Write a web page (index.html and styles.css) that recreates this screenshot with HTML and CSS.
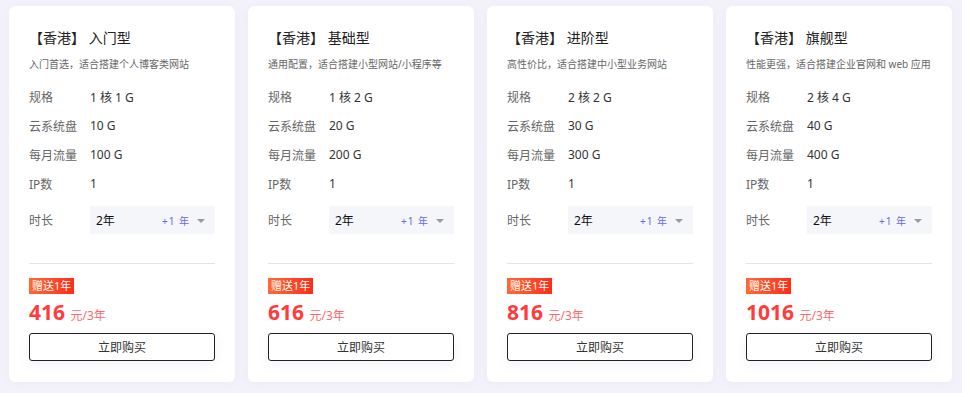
FILE: index.html
```html
<!DOCTYPE html>
<html lang="zh-CN">
<head>
  <meta charset="UTF-8">
  <meta name="viewport" content="width=device-width, initial-scale=1.0">
  <title>香港云服务器套餐</title>
  <link rel="stylesheet" href="styles.css">
</head>
<body>

  <div class="plans">
    <div class="card">
      <h3 class="title">【香港】 入门型</h3>
      <p class="desc">入门首选，适合搭建个人博客类网站</p>
      <div class="row"><span class="label">规格</span><span class="value">1 核 1 G</span></div>
      <div class="row"><span class="label">云系统盘</span><span class="value">10 G</span></div>
      <div class="row"><span class="label">每月流量</span><span class="value">100 G</span></div>
      <div class="row"><span class="label">IP数</span><span class="value">1</span></div>
      <div class="row time-row">
        <span class="label">时长</span>
        <div class="select"><span class="sel-val">2年</span><span class="extra">+1 年</span><span class="arrow"></span></div>
      </div>
      <div class="bottom">
        <span class="badge">赠送1年</span>
        <div class="price">416 <span class="unit">元/3年</span></div>
        <button class="buy">立即购买</button>
      </div>
    </div>

    <div class="card">
      <h3 class="title">【香港】 基础型</h3>
      <p class="desc">通用配置，适合搭建小型网站/小程序等</p>
      <div class="row"><span class="label">规格</span><span class="value">1 核 2 G</span></div>
      <div class="row"><span class="label">云系统盘</span><span class="value">20 G</span></div>
      <div class="row"><span class="label">每月流量</span><span class="value">200 G</span></div>
      <div class="row"><span class="label">IP数</span><span class="value">1</span></div>
      <div class="row time-row">
        <span class="label">时长</span>
        <div class="select"><span class="sel-val">2年</span><span class="extra">+1 年</span><span class="arrow"></span></div>
      </div>
      <div class="bottom">
        <span class="badge">赠送1年</span>
        <div class="price">616 <span class="unit">元/3年</span></div>
        <button class="buy">立即购买</button>
      </div>
    </div>

    <div class="card">
      <h3 class="title">【香港】 进阶型</h3>
      <p class="desc">高性价比，适合搭建中小型业务网站</p>
      <div class="row"><span class="label">规格</span><span class="value">2 核 2 G</span></div>
      <div class="row"><span class="label">云系统盘</span><span class="value">30 G</span></div>
      <div class="row"><span class="label">每月流量</span><span class="value">300 G</span></div>
      <div class="row"><span class="label">IP数</span><span class="value">1</span></div>
      <div class="row time-row">
        <span class="label">时长</span>
        <div class="select"><span class="sel-val">2年</span><span class="extra">+1 年</span><span class="arrow"></span></div>
      </div>
      <div class="bottom">
        <span class="badge">赠送1年</span>
        <div class="price">816 <span class="unit">元/3年</span></div>
        <button class="buy">立即购买</button>
      </div>
    </div>

    <div class="card">
      <h3 class="title">【香港】 旗舰型</h3>
      <p class="desc">性能更强，适合搭建企业官网和 web 应用</p>
      <div class="row"><span class="label">规格</span><span class="value">2 核 4 G</span></div>
      <div class="row"><span class="label">云系统盘</span><span class="value">40 G</span></div>
      <div class="row"><span class="label">每月流量</span><span class="value">400 G</span></div>
      <div class="row"><span class="label">IP数</span><span class="value">1</span></div>
      <div class="row time-row">
        <span class="label">时长</span>
        <div class="select"><span class="sel-val">2年</span><span class="extra">+1 年</span><span class="arrow"></span></div>
      </div>
      <div class="bottom">
        <span class="badge">赠送1年</span>
        <div class="price">1016 <span class="unit">元/3年</span></div>
        <button class="buy">立即购买</button>
      </div>
    </div>
  </div>

</body>
</html>
```

FILE: styles.css
```css
body {
  margin: 0;
  background-color: #f3f2fb;
  font-family: "Noto Sans", "Noto Sans CJK SC", sans-serif;
  color: #333;
}

.plans {
  display: grid;
  grid-template-columns: repeat(4, 226px);
  gap: 13px;
  padding: 6px 9px;
}

.card {
  background-color: #fff;
  border-radius: 6px;
  padding: 22px 20px 21px;
  box-shadow: 0 2px 10px rgba(120, 120, 180, 0.06);
}

.title {
  margin: 0;
  font-size: 14px;
  line-height: 20px;
  font-weight: 400;
  color: #222;
}

.desc {
  margin: 8px 0 10px;
  font-size: 10px;
  line-height: 16px;
  color: #666;
  white-space: nowrap;
}

.row {
  display: flex;
  align-items: center;
  height: 29px;
  font-size: 12px;
}

.label {
  width: 61px;
  flex-shrink: 0;
  color: #666;
}

.value {
  color: #333;
}

.time-row {
  margin-top: 8px;
  height: 28px;
}

.select {
  flex: 1;
  height: 28px;
  display: flex;
  align-items: center;
  background-color: #f5f6fa;
  padding: 0 10px 0 6px;
}

.sel-val {
  flex: 1;
  color: #111;
}

.extra {
  font-size: 10px;
  letter-spacing: 1px;
  color: #6b66f0;
  margin-right: 7px;
}

.arrow {
  width: 0;
  height: 0;
  border-left: 4px solid transparent;
  border-right: 4px solid transparent;
  border-top: 4px solid #999;
  margin-top: 2px;
}

.bottom {
  margin-top: 29px;
  border-top: 1px solid #e4e4e8;
  padding-top: 14px;
}

.badge {
  display: block;
  width: max-content;
  height: 16px;
  line-height: 16px;
  padding: 0 3px;
  font-size: 11px;
  color: #fff;
  background: linear-gradient(90deg, #ff6a33, #ff2d1a);
}

.price {
  margin-top: 5px;
  font-size: 21px;
  line-height: 26px;
  font-weight: 700;
  color: #ff3b3b;
}

.unit {
  font-size: 12px;
  font-weight: 400;
  color: #ff6a6a;
}

.buy {
  display: block;
  width: 100%;
  height: 28px;
  margin-top: 4px;
  background-color: #fff;
  border: 1px solid #222;
  border-radius: 3px;
  font-family: inherit;
  font-size: 12px;
  color: #333;
  box-shadow: 0 4px 12px rgba(120, 120, 180, 0.08);
  cursor: pointer;
}
```
